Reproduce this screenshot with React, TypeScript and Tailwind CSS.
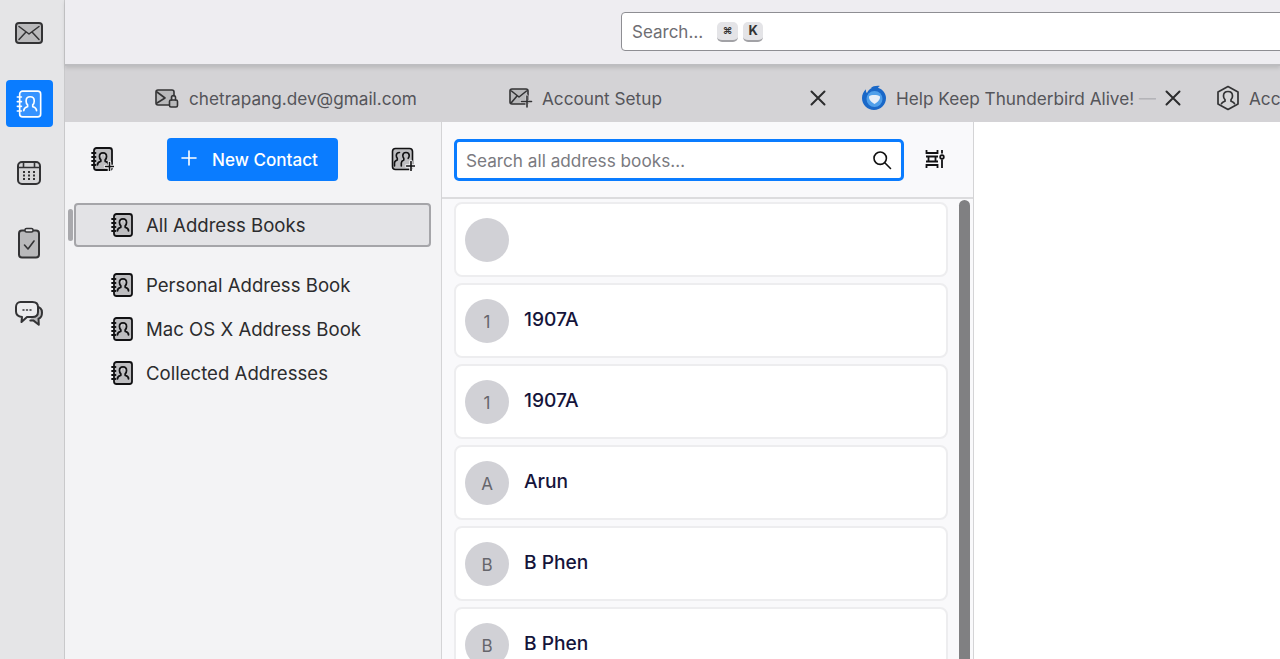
import React from "react";

const Book = ({ plus = false, white = false, size = 24 }: { plus?: boolean; white?: boolean; size?: number }) => {
  const c = white ? "#fff" : "#111113";
  return (
    <svg width={size} height={size} viewBox="0 0 24 24" fill="none" stroke={c} strokeWidth={white ? 1.4 : 1.8} strokeLinecap="round" strokeLinejoin="round">
      <rect x="4" y="1" width="18" height="22" rx="2.500" fill={white ? "rgba(255,255,255,0.18)" : "#bdbdc0"} />
      <path d="M2 6h3.500M2 10h3.500M2 14h3.500M2 18h3.500" />
      <path d="M13 5.800c-2.200 0-3.500 1.500-3.500 3.600 0 1.700.7 2.800 1.300 3.400v1.500c-1.300.5-3.300 1-3.300 3.500M13 5.800c2.200 0 3.500 1.500 3.500 3.600 0 1.700-.7 2.800-1.300 3.400v1.500c1.300.5 3.300 1 3.300 3.500" fill={white ? "none" : "#e3e3e6"} />
      {plus && <path d="M19.500 15.500v8M15.500 19.500h8" stroke="#f3f3f5" strokeWidth="3.500" />}
      {plus && <path d="M19.500 15.500v8M15.500 19.500h8" strokeWidth="1.500" />}
    </svg>
  );
};

const BookGroup = () => (
  <svg width="24" height="24" viewBox="0 0 24 24" fill="none" stroke="#111113" strokeWidth="1.600" strokeLinecap="round" strokeLinejoin="round">
    <rect x="1.500" y="1.500" width="20" height="21" rx="3" fill="#bdbdc0" />
    <path d="M8.500 5.500c-2 0-3.200 1.300-3.200 3 0 1.400.5 2.200 1 2.800v1.700c-1 .4-2.800 1-2.800 3v3" />
    <path d="M15 5.500c-2 0-3.200 1.300-3.200 3 0 1.400.5 2.200 1 2.800v1.700c-1 .4-2.500 1-2.500 3v3M15 5.500c2 0 3.200 1.300 3.200 3 0 1.400-.5 2.200-1 2.800" />
    <path d="M20 14.500v9M15.500 19h8.500" stroke="#f3f3f5" strokeWidth="3.500" />
    <path d="M20 14.500v9M15.500 19h8.500" />
  </svg>
);

const Mail = () => (
  <svg width="30" height="24" viewBox="0 0 30 24" fill="none" stroke="#333335" strokeWidth="2" strokeLinecap="round" strokeLinejoin="round">
    <rect x="2" y="2" width="26" height="20" rx="3" fill="#b9b9bb" />
    <path d="M5 5.500 15 13 25 5.500M5 18.500l7-7.500M25 18.500 18 11" strokeWidth="1.500" />
  </svg>
);

const Calendar = () => (
  <svg width="26" height="26" viewBox="0 0 26 26" fill="none" stroke="#333335" strokeWidth="2" strokeLinecap="round">
    <rect x="2" y="2" width="22" height="22" rx="4" fill="#d6d6d8" />
    <path d="M2 7.500h22M7.500 2v5.500M18.500 2v5.500" strokeWidth="1.600" />
    <path d="M7 12h2M12 12h2M17 12h2M7 15.500h2M12 15.500h2M17 15.500h2M7 19h2M12 19h2M17 19h2" strokeWidth="2" strokeLinecap="butt" />
  </svg>
);

const Tasks = () => (
  <svg width="24" height="32" viewBox="0 0 24 32" fill="none" stroke="#333335" strokeWidth="2" strokeLinecap="round" strokeLinejoin="round">
    <rect x="2" y="3.500" width="20" height="27" rx="3" fill="#b9b9bb" />
    <rect x="8" y="1.500" width="8" height="3.500" rx="1.500" fill="#e5e5e7" strokeWidth="1.500" />
    <path d="M7.500 18l3.500 4 6-8" strokeWidth="1.600" />
  </svg>
);

const Chat = () => (
  <svg width="30" height="30" viewBox="0 0 30 30" fill="none" stroke="#333335" strokeWidth="2" strokeLinecap="round" strokeLinejoin="round">
    <path d="M22 6.500c3.500.4 6 2 6 6 0 3.500-1 5.500-3.500 6.200l.3 6-5.500-4.300h-3" fill="#b9b9bb" />
    <path d="M6.500 2h12C22 2 24 4 24 7v5c0 3-2 5-5.500 5H13l-5.500 5 .5-5.100C4 16.500 2 15 2 11.500V7c0-3 2-5 4.500-5z" fill="#ececee" />
    <path d="M9 10h1M12.500 10h1M16 10h1" strokeWidth="1.500" />
  </svg>
);

const TabMailKey = () => (
  <svg width="24" height="20" viewBox="0 0 24 20" fill="none" stroke="#333335" strokeWidth="1.600" strokeLinecap="round" strokeLinejoin="round">
    <path d="M15 17H3a2 2 0 0 1-2-2V4a2 2 0 0 1 2-2h14a2 2 0 0 1 2 2v4" fill="#b9b9bb" />
    <path d="M2 4l8 6-8 5" />
    <rect x="14.500" y="12" width="8" height="7" rx="1.500" fill="#b9b9bb" />
    <path d="M16.500 12V9.500a2 2 0 0 1 4 0V12" />
  </svg>
);

const TabMailPlus = () => (
  <svg width="24" height="21" viewBox="0 0 24 21" fill="none" stroke="#333335" strokeWidth="1.600" strokeLinecap="round" strokeLinejoin="round">
    <rect x="1" y="2" width="18" height="15" rx="2" fill="#b9b9bb" />
    <path d="M2.500 4l7.500 6 7.500-6M2.500 15.500 8 9" />
    <path d="M18 9v11M12.500 14.500h11" stroke="#d4d3d6" strokeWidth="3" />
    <path d="M18 9v11M12.500 14.500h10" />
  </svg>
);

const Close = () => (
  <svg width="16" height="16" viewBox="0 0 16 16" fill="none" stroke="#2c2c2e" strokeWidth="2" strokeLinecap="round">
    <path d="M1.500 1.500l13 13M14.500 1.500l-13 13" />
  </svg>
);

const Bird = () => (
  <svg width="26" height="26" viewBox="0 0 26 26">
    <path d="M13 2.500c-1 0-2 .2-3 .6C11.500 1.500 15 .5 19 1c-1 .4-1.700 1-2 1.700C21.700 4.300 25 8.300 25 13c0 6.600-5.400 12-12 12S1 19.600 1 13C1 9.500 2.500 6.500 5 4.200 4.700 6 5.200 7.300 6 8c1.200-3 4-5.500 7-5.500z" fill="#1a68c8" />
    <circle cx="13.500" cy="14" r="8" fill="#4f9fea" />
    <path d="M8 11.500c2-1.800 8-2 11 0 .4 3-2.500 6-5.500 7.500C10.500 17.500 7.600 14.500 8 11.500z" fill="#e6eef8" />
  </svg>
);

const Hex = () => (
  <svg width="24" height="26" viewBox="0 0 24 26" fill="none" stroke="#333335" strokeWidth="1.700" strokeLinecap="round" strokeLinejoin="round">
    <path d="M12 1.500 22 7v12l-10 5.500L2 19V7z" fill="#d6d6d8" />
    <path d="M12 6.500c-2.800 0-4.500 1.900-4.500 4.500 0 1.800.7 3 1.500 3.700v1.500c-1 .4-2.800 1-3.500 2.500M12 6.500c2.800 0 4.500 1.900 4.500 4.500 0 1.800-.7 3-1.500 3.700v1.500c1 .4 2.800 1 3.500 2.500" />
  </svg>
);

const Sliders = () => (
  <svg width="20" height="20" viewBox="0 0 20 20" fill="none" stroke="#111113" strokeWidth="1.800" strokeLinecap="butt">
    <path d="M1.500 1v3h11V1M1 7.500h12M3.500 7.500v5M10.500 7.500v5M1 12.500h12M1.500 19v-3h11v3" />
    <path d="M17 1v3.500M17 10.500V19" />
    <circle cx="17" cy="8" r="1.800" />
  </svg>
);

const Search = () => (
  <svg width="20" height="20" viewBox="0 0 20 20" fill="none" stroke="#111" strokeWidth="1.600" strokeLinecap="round">
    <circle cx="8.200" cy="8.200" r="6.200" />
    <path d="M12.800 12.800 18.500 18.500" />
  </svg>
);

const contacts = [
  { i: "", n: "" },
  { i: "1", n: "1907A" },
  { i: "1", n: "1907A" },
  { i: "A", n: "Arun" },
  { i: "B", n: "B Phen" },
  { i: "B", n: "B Phen" },
];

const books = ["Personal Address Book", "Mac OS X Address Book", "Collected Addresses"];

export default function App() {
  return (
    <div className="flex h-[659px] w-[1280px] overflow-hidden bg-white font-['Inter','Liberation_Sans',sans-serif]">
      <nav className="flex w-[65px] shrink-0 flex-col items-center border-r border-[#c9c9cb] bg-[#e5e5e7] pr-[6px]">
        <div className="mt-[21px] flex h-6 w-[30px] items-center justify-center">
          <Mail />
        </div>
        <div className="mt-[35px] flex h-[47px] w-[47px] items-center justify-center rounded-[4px] bg-[#0a7cff]">
          <Book white size={28} />
        </div>
        <div className="mt-[33px] flex h-[26px] items-center">
          <Calendar />
        </div>
        <div className="mt-[41px] flex h-8 items-center">
          <Tasks />
        </div>
        <div className="mt-[41px] flex h-[30px] items-center">
          <Chat />
        </div>
      </nav>

      <div className="flex min-w-0 flex-1 flex-col">
        <header className="z-10 flex h-[66px] shrink-0 items-start border-b-[2px] border-[#bdbdc0] bg-[#eeedf1] pl-[556px] pt-[12px] shadow-[0_2px_4px_rgba(0,0,0,0.12)]">
          <div className="flex h-[39px] w-[700px] shrink-0 items-center rounded-[4px] border border-[#8e8e93] bg-white pl-[10px] text-[17px] text-[#6e6e73]">
            <span className="mt-[2px]">Search…</span>
            <kbd className="ml-[14px] flex h-[20px] w-[21px] items-center justify-center rounded-[5px] border-b-2 border-[#a2a2a6] bg-[#e4e4e7] font-['Inter'] text-[10px] font-bold text-[#333]">⌘</kbd>
            <kbd className="ml-[5px] flex h-[20px] w-[20px] items-center justify-center rounded-[5px] border-b-2 border-[#a2a2a6] bg-[#e4e4e7] font-['Inter'] text-[13px] font-bold text-[#333]">K</kbd>
          </div>
        </header>

        <div className="flex h-[56px] shrink-0 items-center overflow-hidden whitespace-nowrap bg-[#d4d3d6] pt-[8px] text-[17.200px] text-[#55555a]">
          <div className="ml-[90px] flex w-[354px] shrink-0 items-center gap-[10px]">
            <TabMailKey />
            <span className="mt-[1px]">chetrapang.dev@gmail.com</span>
          </div>
          <div className="flex w-[352px] shrink-0 items-center gap-[9px] pr-[35px]">
            <TabMailPlus />
            <span className="mt-[1px] flex-1">Account Setup</span>
            <Close />
          </div>
          <div className="flex w-[355px] shrink-0 items-center gap-[9px] pr-[35px]">
            <Bird />
            <span className="mt-[1px] flex-1 overflow-hidden">Help Keep Thunderbird Alive! <span className="text-[#b4b4b8]">—</span></span>
            <Close />
          </div>
          <div className="flex shrink-0 items-center gap-[9px]">
            <Hex />
            <span className="mt-[1px]">Account Settings</span>
          </div>
        </div>

        <div className="flex min-h-0 flex-1">
          <aside className="w-[377px] shrink-0 border-r border-[#d4d4d6] bg-[#f3f3f5]">
            <div className="flex h-[81px] items-start pl-[25px] pr-[26px] pt-[16px]">
              <div className="mt-[9px] flex h-6 w-6 items-center justify-center">
                <Book plus />
              </div>
              <button className="ml-[53px] flex h-[43px] w-[171px] items-center justify-start gap-[15px] rounded-[4px] bg-[#0a7cff] pl-[14px] text-[17.100px] font-medium text-white">
                <svg width="16" height="16" viewBox="0 0 16 16" fill="none" stroke="#fff" strokeWidth="1.600" strokeLinecap="round" className="mb-[3px]">
                  <path d="M8 1v14M1 8h14" />
                </svg>
                <span>New Contact</span>
              </button>
              <div className="ml-[53px] mt-[9px] flex h-6 w-6 items-center justify-center">
                <BookGroup />
              </div>
            </div>

            <div className="relative ml-[9px] mr-[10px] flex h-[44px] items-center rounded-[4px] border-2 border-[#a5a5a9] bg-[#e3e3e6] pl-[34px] text-[18.600px] text-[#2c2c2e]">
              <span className="absolute left-[-8px] top-[4px] h-[32px] w-[5px] rounded-full bg-[#a9a9ad]" />
              <Book />
              <span className="ml-[12px] mt-[2px]">All Address Books</span>
            </div>

            <ul className="mt-[16px] text-[18.600px] text-[#2c2c2e]">
              {books.map((b) => (
                <li key={b} className="flex h-[44px] items-center pl-[45px]">
                  <Book />
                  <span className="ml-[12px] mt-[2px]">{b}</span>
                </li>
              ))}
            </ul>
          </aside>

          <section className="flex w-[532px] shrink-0 flex-col border-r border-[#d4d4d6] bg-[#f9f9fb]">
            <div className="flex h-[77px] shrink-0 items-start border-b-[2px] border-[#dcdcde] pl-[12px] pt-[17px]">
              <div className="flex h-[42px] w-[450px] items-center justify-between rounded-[5px] border-[3px] border-[#0a7cff] bg-white pl-[9px] pr-[9px] text-[17.200px] text-[#7a7a80]">
                <span className="mt-[1px]">Search all address books…</span>
                <Search />
              </div>
              <div className="ml-[21px] mt-[10px]">
                <Sliders />
              </div>
            </div>
            <div className="flex min-h-0 flex-1 overflow-hidden pl-[12px]">
              <ul className="flex w-[494px] shrink-0 flex-col gap-[6px] pt-[3px]">
                {contacts.map((c, idx) => (
                  <li key={idx} className="flex h-[75px] shrink-0 items-center rounded-[8px] border-2 border-[#ededef] bg-white pl-[9px]">
                    <div className="flex h-[44px] w-[44px] shrink-0 items-center justify-center rounded-full bg-[#d1d1d6] pt-[4px] text-[17px] text-[#66666c]">
                      {c.i}
                    </div>
                    <span className="mb-[3px] ml-[15px] text-[19.200px] font-medium text-[#15143b]">{c.n}</span>
                  </li>
                ))}
              </ul>
              <div className="ml-[11px] mt-[1px] h-full w-[11px] shrink-0 rounded-t-full bg-[#808082]" />
            </div>
          </section>

          <main className="flex-1 bg-white" />
        </div>
      </div>
    </div>
  );
}
